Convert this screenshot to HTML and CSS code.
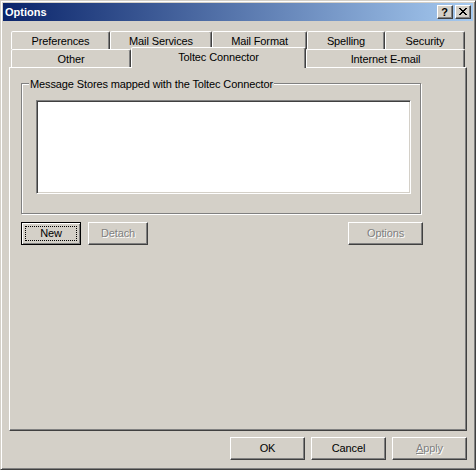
FILE: index.html
```html
<!DOCTYPE html>
<html>
<head>
<meta charset="utf-8">
<title>Options</title>
<link rel="stylesheet" href="styles.css">
</head>
<body>
<div class="window">
  <div class="titlebar">
    <span class="title">Options</span>
    <div class="tbtns">
      <div class="tbtn help">?</div>
      <div class="tbtn close">
        <svg width="8" height="7" viewBox="0 0 8 7" shape-rendering="crispEdges"><path fill="#000" d="M0 0h2v1h-2z M6 0h2v1h-2z M1 1h2v1h-2z M5 1h2v1h-2z M2 2h4v1h-4z M3 3h2v1h-2z M2 4h4v1h-4z M1 5h2v1h-2z M5 5h2v1h-2z M0 6h2v1h-2z M6 6h2v1h-2z"/></svg>
      </div>
    </div>
  </div>
  <div class="body">
    <div class="tabs">
      <div class="tabrow">
        <div class="tab w-pref">Preferences</div>
        <div class="tab w-mserv">Mail Services</div>
        <div class="tab w-mfmt">Mail Format</div>
        <div class="tab w-spell">Spelling</div>
        <div class="tab w-sec">Security</div>
      </div>
      <div class="tabrow">
        <div class="tab w-other">Other</div>
        <div class="tab sel w-toltec">Toltec Connector</div>
        <div class="tab w-inet">Internet E-mail</div>
      </div>
    </div>
    <div class="panel">
      <div class="group">
        <div class="legend">Message Stores mapped with the Toltec Connector</div>
        <div class="list"></div>
      </div>
      <div class="btnrow">
        <div class="btngroup">
          <div class="btn small default"><span class="focus">New</span></div>
          <div class="btn small disabled">Detach</div>
        </div>
        <div class="btn disabled">Options</div>
      </div>
    </div>
    <div class="footer">
      <div class="btn">OK</div>
      <div class="btn">Cancel</div>
      <div class="btn disabled"><span class="ul">A</span>pply</div>
    </div>
  </div>
</div>
</body>
</html>
```
FILE: styles.css
```css
* { box-sizing: border-box; }
html, body { margin: 0; padding: 0; background: #d4d0c8; }
body { font-family: "Liberation Sans", Arial, sans-serif; font-size: 11px; color: #000; letter-spacing: -0.12px; }

.window {
  width: 476px; height: 470px;
  border: 1px solid; border-color: #d4d0c8 #404040 #404040 #d4d0c8;
  box-shadow: inset 1px 1px #fff, inset -1px -1px #808080;
  padding: 2px;
  background: #d4d0c8;
  display: flex; flex-direction: column;
}

.titlebar {
  height: 18px; flex: none;
  background: linear-gradient(to right, #0a246a, #a6caf0);
  display: flex; align-items: center; justify-content: space-between;
  padding: 0 2px;
}
.title { color: #fff; font-weight: bold; font-size: 11px; line-height: 13px; padding-top: 1px; letter-spacing: 0; }
.tbtns { display: flex; gap: 2px; }
.tbtn {
  width: 16px; height: 14px;
  background: #d4d0c8;
  border: 1px solid; border-color: #fff #404040 #404040 #fff;
  box-shadow: inset -1px -1px #808080;
  display: flex; align-items: center; justify-content: center;
}
.tbtn.help { font-weight: bold; font-size: 11px; line-height: 12px; padding: 0 1px 1px 0; }
.tbtn.close svg { display: block; margin: 0 1px 1px 0; }

.body { flex: 1; padding: 10px 6px 0 6px; display: flex; flex-direction: column; }

.tabs { margin-left: 2px; width: 454px; }
.tabrow { display: flex; height: 18px; }
.tab {
  height: 18px;
  border: 1px solid; border-bottom: none;
  border-color: #fff #404040 transparent #fff;
  border-radius: 2px 2px 0 0;
  box-shadow: inset -1px 0 #808080;
  background: #d4d0c8;
  text-align: center; line-height: 13px; padding-top: 3px;
  white-space: nowrap;
}
.tab.sel { height: 21px; margin-top: -2px; margin-bottom: -1px; position: relative; z-index: 1; }
.w-pref { width: 99px; }
.w-mserv { width: 102px; }
.w-mfmt { width: 95px; }
.w-spell { width: 78px; }
.w-sec { width: 80px; }
.w-other { width: 120px; }
.w-toltec { width: 175px; }
.w-inet { width: 159px; }

.panel {
  width: 458px; height: 364px; flex: none;
  border: 1px solid; border-color: #fff #404040 #404040 #fff;
  box-shadow: inset -1px -1px #808080;
  padding: 15px 0 0 11px;
}

.group {
  width: 400px; height: 131px;
  border: 1px solid #808080;
  box-shadow: inset 1px 1px #fff, 1px 1px #fff;
}
.legend {
  width: fit-content;
  margin: -6px 0 0 7px; padding: 0 1px;
  background: #d4d0c8;
  line-height: 13px; white-space: nowrap;
}
.list {
  width: 375px; height: 94px;
  margin: 9px 0 0 14px;
  background: #fff;
  border: 1px solid; border-color: #808080 #fff #fff #808080;
  box-shadow: inset 1px 1px #404040, inset -1px -1px #d4d0c8;
}

.btnrow { width: 402px; margin-top: 8px; display: flex; justify-content: space-between; }
.btngroup { display: flex; gap: 7px; }

.btn {
  width: 75px; height: 23px;
  border: 1px solid; border-color: #fff #404040 #404040 #fff;
  box-shadow: inset -1px -1px #808080;
  background: #d4d0c8;
  display: flex; align-items: center; justify-content: center;
  line-height: 13px; padding-bottom: 1px;
}
.btn.small { width: 60px; }
.btn.default {
  border-color: #000;
  box-shadow: inset 1px 1px #fff, inset -1px -1px #808080;
  padding: 3px; align-items: stretch;
}
.focus {
  flex: 1; border: 1px dotted #000;
  display: flex; align-items: center; justify-content: center;
  line-height: 11px;
}
.btn.disabled { color: #808080; text-shadow: 1px 1px 0 #fff; }
.ul { text-decoration: underline; }

.footer { margin-top: 6px; display: flex; justify-content: flex-end; gap: 6px; }
```
